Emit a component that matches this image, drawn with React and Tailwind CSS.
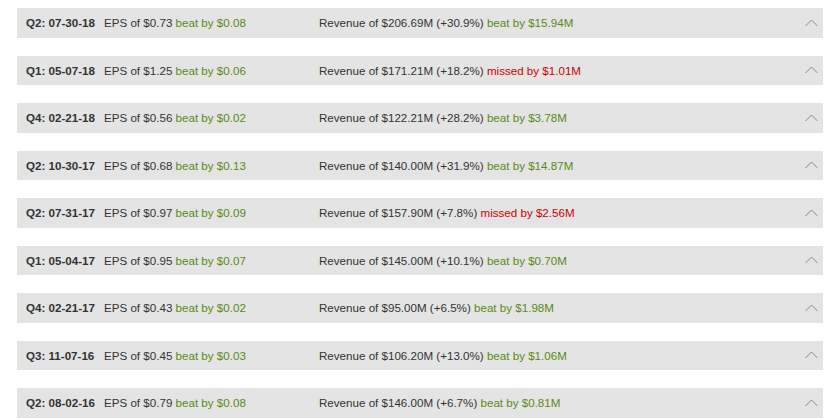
const rows = [
  { q: "Q2: 07-30-18", eps: "$0.73", epsDiff: "beat by $0.08", epsBeat: true, rev: "$206.69M (+30.9%)", revDiff: "beat by $15.94M", revBeat: true },
  { q: "Q1: 05-07-18", eps: "$1.25", epsDiff: "beat by $0.06", epsBeat: true, rev: "$171.21M (+18.2%)", revDiff: "missed by $1.01M", revBeat: false },
  { q: "Q4: 02-21-18", eps: "$0.56", epsDiff: "beat by $0.02", epsBeat: true, rev: "$122.21M (+28.2%)", revDiff: "beat by $3.78M", revBeat: true },
  { q: "Q2: 10-30-17", eps: "$0.68", epsDiff: "beat by $0.13", epsBeat: true, rev: "$140.00M (+31.9%)", revDiff: "beat by $14.87M", revBeat: true },
  { q: "Q2: 07-31-17", eps: "$0.97", epsDiff: "beat by $0.09", epsBeat: true, rev: "$157.90M (+7.8%)", revDiff: "missed by $2.56M", revBeat: false },
  { q: "Q1: 05-04-17", eps: "$0.95", epsDiff: "beat by $0.07", epsBeat: true, rev: "$145.00M (+10.1%)", revDiff: "beat by $0.70M", revBeat: true },
  { q: "Q4: 02-21-17", eps: "$0.43", epsDiff: "beat by $0.02", epsBeat: true, rev: "$95.00M (+6.5%)", revDiff: "beat by $1.98M", revBeat: true },
  { q: "Q3: 11-07-16", eps: "$0.45", epsDiff: "beat by $0.03", epsBeat: true, rev: "$106.20M (+13.0%)", revDiff: "beat by $1.06M", revBeat: true },
  { q: "Q2: 08-02-16", eps: "$0.79", epsDiff: "beat by $0.08", epsBeat: true, rev: "$146.00M (+6.7%)", revDiff: "beat by $0.81M", revBeat: true },
];

function Chevron() {
  return (
    <svg width="13" height="8" viewBox="0 0 13 8" className="shrink-0">
      <path d="M0.5 7 L6.5 1 L12.5 7" fill="none" stroke="#8a8a8a" strokeWidth="1" />
    </svg>
  );
}

function Diff({ beat, children }) {
  return (
    <span className={beat ? "text-[#5a8a16]" : "text-[#cc0000]"}>{children}</span>
  );
}

export default function App() {
  return (
    <div
      className="bg-white w-[830px] h-[419px] overflow-hidden pt-[8px] pl-[17px] pr-[7px] text-[11.6px] text-[#333333]"
      style={{ fontFamily: '"Liberation Sans", Arial, sans-serif' }}
    >
      {rows.map((r) => (
        <div
          key={r.q}
          className="flex items-center h-[29.5px] mb-[18px] bg-[#e4e4e4] pl-[9px] pr-[5px]"
        >
          <span className="w-[78px] shrink-0 font-bold">{r.q}</span>
          <span className="w-[215px] shrink-0">
            EPS of {r.eps} <Diff beat={r.epsBeat}>{r.epsDiff}</Diff>
          </span>
          <span className="flex-1">
            Revenue of {r.rev} <Diff beat={r.revBeat}>{r.revDiff}</Diff>
          </span>
          <Chevron />
        </div>
      ))}
    </div>
  );
}
